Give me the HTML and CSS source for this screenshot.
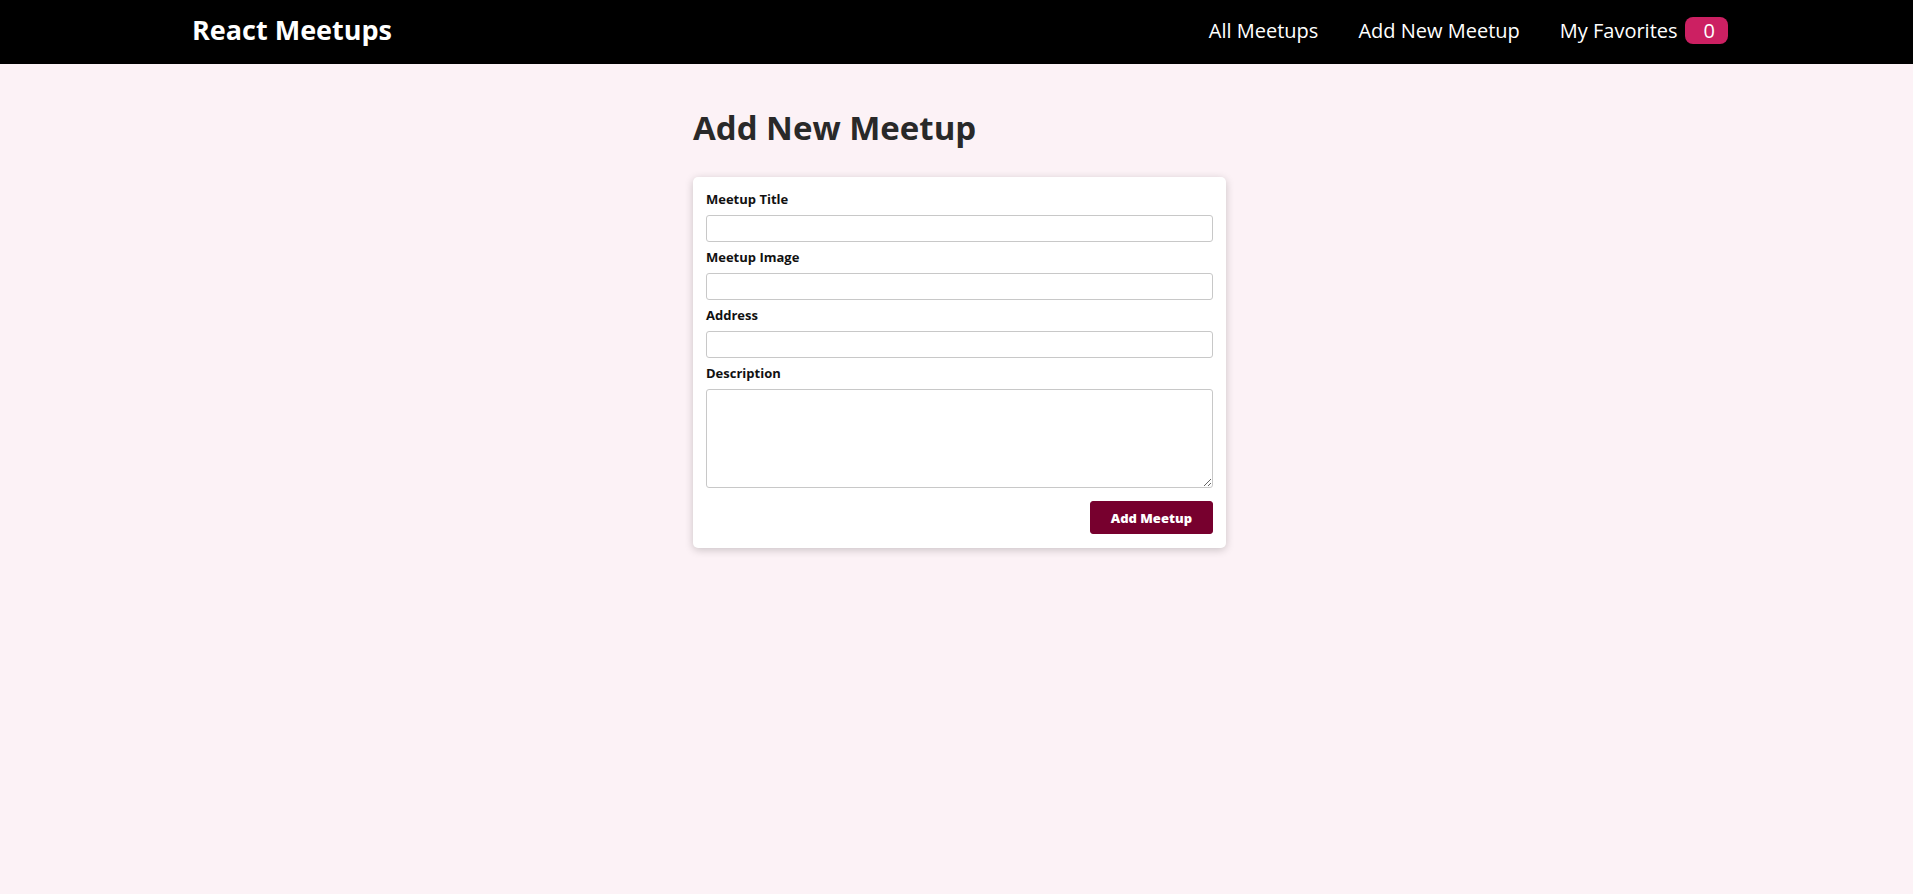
FILE: index.html
```
<!DOCTYPE html>
<html lang="en">
<head>
  <meta charset="utf-8">
  <meta name="viewport" content="width=device-width, initial-scale=1">
  <title>React Meetups</title>
  <link rel="stylesheet" href="styles.css">
</head>
<body>
  <header class="header">
    <div class="logo">React Meetups</div>
    <nav>
      <ul class="nav-list">
        <li><a href="#all">All Meetups</a></li>
        <li><a href="#new">Add New Meetup</a></li>
        <li><a href="#favorites">My Favorites<span class="badge">0</span></a></li>
      </ul>
    </nav>
  </header>
  <main class="main">
    <h1 class="title">Add New Meetup</h1>
    <form class="card">
      <div class="control">
        <label for="title">Meetup Title</label>
        <input type="text" id="title" required>
      </div>
      <div class="control">
        <label for="image">Meetup Image</label>
        <input type="url" id="image" required>
      </div>
      <div class="control">
        <label for="address">Address</label>
        <input type="text" id="address" required>
      </div>
      <div class="control">
        <label for="description">Description</label>
        <textarea id="description" rows="5" required></textarea>
      </div>
      <div class="actions">
        <button class="button">Add Meetup</button>
      </div>
    </form>
  </main>
</body>
</html>
```
FILE: styles.css
```
* {
  box-sizing: border-box;
}

body {
  margin: 0;
  background: #fcf2f6;
  color: #292929;
  font-family: "Open Sans", sans-serif;
  font-size: 13px;
  line-height: 18px;
}

.header {
  display: flex;
  align-items: center;
  justify-content: space-between;
  height: 64px;
  padding: 0 185px 0 192px;
  background: #000;
  color: #fff;
}

.logo {
  padding-bottom: 4px;
  font-size: 27px;
  line-height: 36px;
  font-weight: 700;
}

.nav-list {
  display: flex;
  gap: 40px;
  margin: 0;
  padding: 0 0 4px;
  list-style: none;
}

.nav-list a {
  color: #fff;
  font-size: 20px;
  line-height: 27px;
  text-decoration: none;
}

.badge {
  display: inline-block;
  margin-left: 7px;
  padding: 0 13px 0 19px;
  border-radius: 8px;
  background: #cc2062;
}

.main {
  width: 90%;
  max-width: 539px;
  margin: 40px auto;
  padding-left: 6px;
}

.title {
  margin: 0 0 25px;
  font-size: 33px;
  line-height: 48px;
}

.card {
  padding: 13px;
  border-radius: 5px;
  background: #fff;
  box-shadow: 0 2px 8px rgba(0, 0, 0, 0.2);
}

.control {
  display: flex;
  flex-direction: column;
  gap: 7px;
  margin-bottom: 6px;
}

.control label {
  color: #111;
  font-weight: 700;
}

.control input,
.control textarea {
  display: block;
  width: 100%;
  margin: 0;
  padding: 3px;
  border: 1px solid #c8c8c8;
  border-radius: 3px;
  background: #fff;
  font: inherit;
  line-height: 19px;
}

.control textarea {
  height: 99px;
}

.actions {
  display: flex;
  justify-content: flex-end;
  margin: 13px 0 1px;
}

.button {
  padding: 7px 20px 6px;
  border: 1px solid #77002e;
  border-radius: 3px;
  background: #77002e;
  color: #fff;
  font: inherit;
  font-weight: 800;
  cursor: pointer;
}
```
